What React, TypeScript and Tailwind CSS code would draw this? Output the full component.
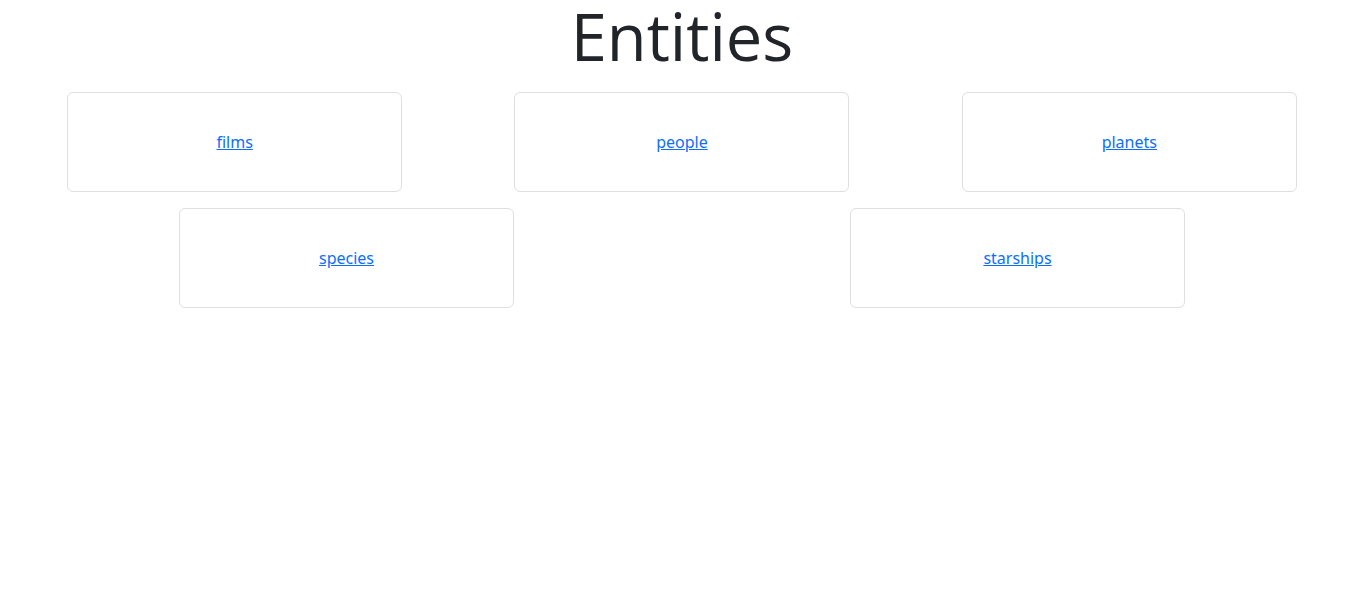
import React from 'react';

const rows = [
  ['films', 'people', 'planets'],
  ['species', 'starships'],
];

export default function App() {
  return (
    <div className="min-h-screen bg-white text-[#212529] font-['Noto_Sans',sans-serif]">
      <h1 className="text-center text-[65px] leading-none font-normal font-['Open_Sans',sans-serif] pt-[4px] mb-[23px]">
        Entities
      </h1>
      <div className="px-[11px] flex flex-col gap-4">
        {rows.map((row, i) => (
          <div key={i} className="flex justify-around">
            {row.map((name) => (
              <div
                key={name}
                className="w-[335px] h-[100px] flex items-center justify-center border border-[#dfdfdf] rounded-md"
              >
                <a href="#" className="text-base text-[#0d6efd] underline">
                  {name}
                </a>
              </div>
            ))}
          </div>
        ))}
      </div>
    </div>
  );
}
